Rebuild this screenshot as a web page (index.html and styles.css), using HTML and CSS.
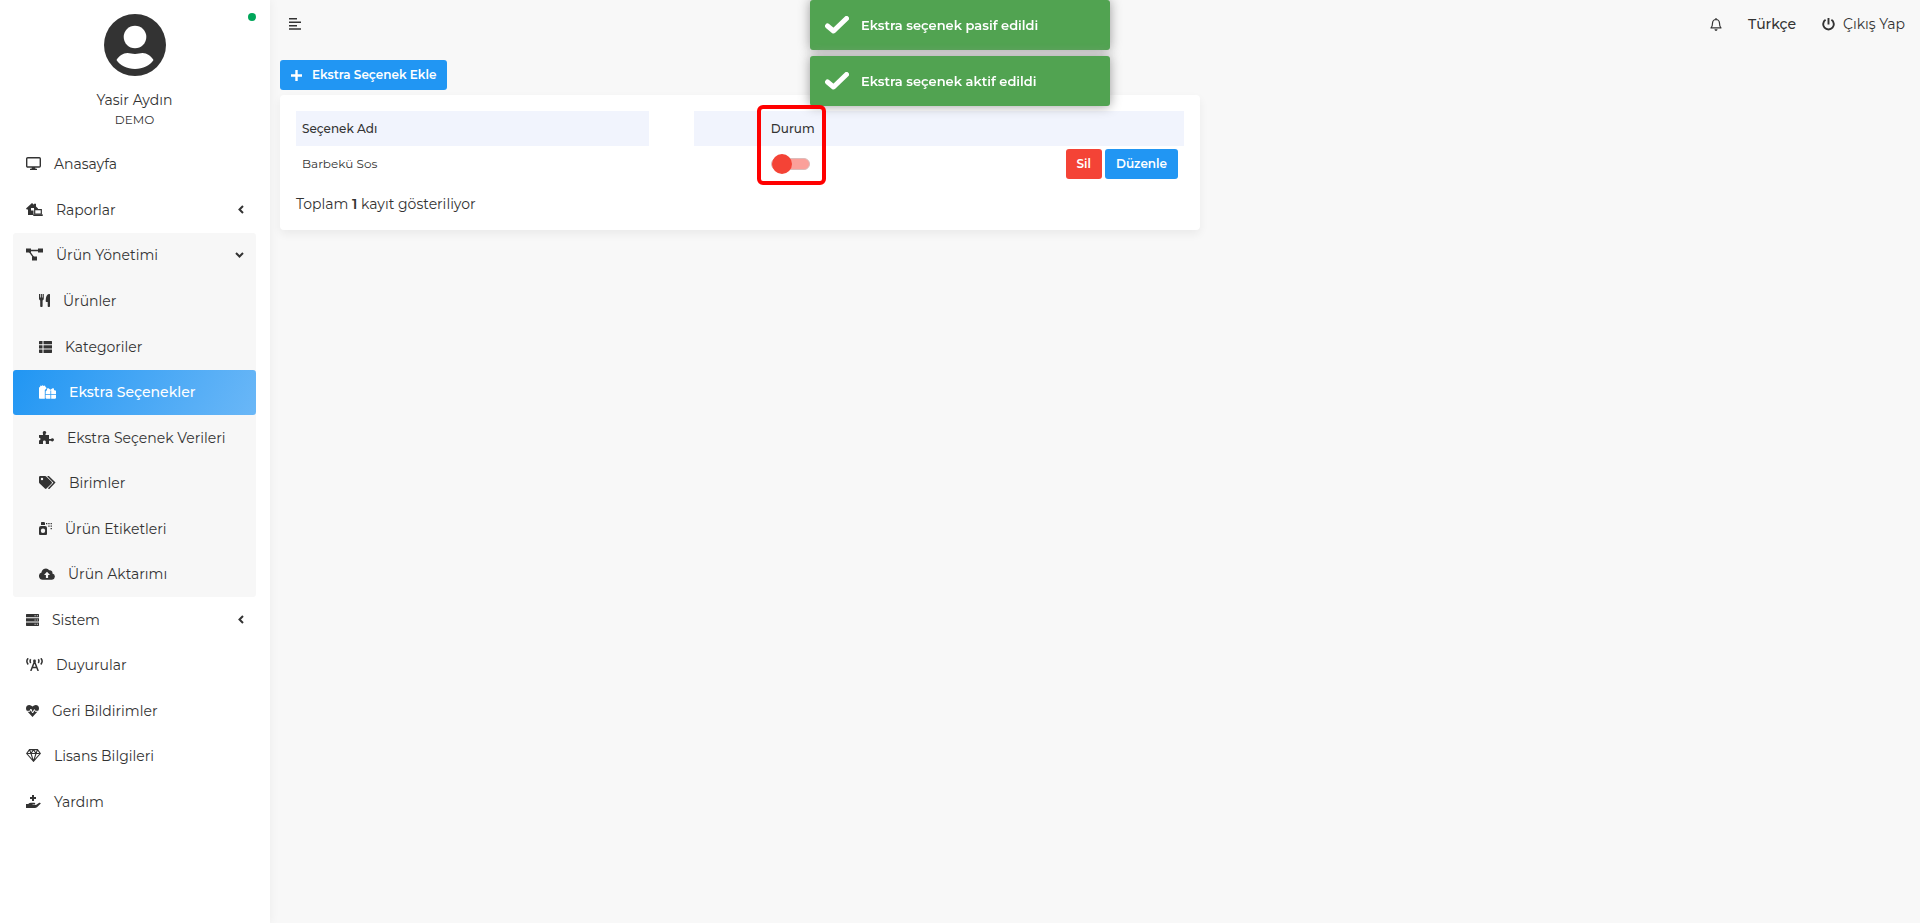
FILE: index.html
```html
<!DOCTYPE html>
<html lang="tr">
<head>
<meta charset="utf-8">
<meta name="viewport" content="width=device-width, initial-scale=1">
<title>Ekstra Seçenekler</title>
<link rel="stylesheet" href="styles.css">
</head>
<body>
<div class="layout">
  <aside class="sidebar">
    <span class="status-dot"></span>
    <div class="profile">
      <svg class="avatar" viewBox="0 0 62 62" aria-hidden="true"><circle cx="31" cy="31" r="31" fill="#333"/><circle cx="31" cy="23" r="11.3" fill="#fff"/><path d="M12.5 46C15 42 19 39 23.500 39C26 39 28 40 31 40S36 39 38.500 39C43 39 47 42 49.500 46C46 51.500 39 55 31 55S16 51.500 12.500 46Z" fill="#fff"/></svg>
      <div class="profile-name">Yasir Aydın</div>
      <div class="profile-role">DEMO</div>
    </div>
    <nav>
      <ul class="menu">
        <li><a class="link" href="#"><svg width="15" height="13" viewBox="0 0 15 13"><rect x=".7" y=".7" width="13.600" height="9.300" rx="1" fill="none" stroke="currentColor" stroke-width="1.400"/><path d="M6 10h3l.5 1.700h1.500V13H4v-1.300h1.500z"/></svg>Anasayfa</a></li>
        <li><a class="link" href="#"><svg width="17" height="13" viewBox="0 0 17 13"><path d="M0 5.500 6 0l2 1.800V.8h2v2.800L12 5.500v.4H8.500L7.500 7v5H2V6.500H.8z"/><path d="M5 5h3v2.500H5z" fill="#fff"/><path d="M8.700 6.700h6.600v4.500H8.700z" fill="#fff" stroke="currentColor" stroke-width="1.200"/><path d="M7 11.400h10v.5q0 1-1 1H8q-1 0-1-1z"/></svg>Raporlar<svg class="arrow" width="6" height="9" viewBox="0 0 6 9"><path d="M5 1 1.500 4.500 5 8" fill="none" stroke="currentColor" stroke-width="2"/></svg></a></li>
        <li class="group">
          <a class="link" href="#"><svg width="17" height="13" viewBox="0 0 17 13"><path d="M0 .5h5v4H0zM12 .5h5v4h-5zM6 8.500h5v4H6z"/><path d="M3 2.500h10M3 3l5 7" stroke="currentColor" stroke-width="1.300"/></svg>Ürün Yönetimi<svg class="arrow" width="9" height="6" viewBox="0 0 9 6"><path d="M1 1 4.500 4.500 8 1" fill="none" stroke="currentColor" stroke-width="2"/></svg></a>
          <ul class="submenu">
            <li><a class="link" href="#"><svg width="11" height="13" viewBox="0 0 11 13"><path d="M0 0h1.100v3.500h.7V0h1.100v3.500h.7V0h1.200v4.500q0 1.600-1.200 2.100V12.300q0 .7-.8.7H2q-.8 0-.8-.7V6.600Q0 6.100 0 4.500zM11 .5v11.800q0 .7-.8.7h-.7q-.8 0-.8-.7V8H7.500q-.8 0-.8-.8Q6.600 1 9.700 0 11-.2 11 .5"/></svg>Ürünler</a></li>
            <li><a class="link" href="#"><svg width="13" height="12" viewBox="0 0 13 12"><path d="M.5 0H3.500V3.300H0V.5zM4.500 0h8l.5.5v2.800H4.500zM0 4.300h3.500v3.300H0zM4.500 4.300H13v3.300H4.500zM0 8.600h3.500V12h-3L0 11.500zM4.500 8.600H13v2.900l-.5.500h-8z"/></svg>Kategoriler</a></li>
            <li><a class="link active" href="#"><svg width="17" height="14" viewBox="0 0 17 14"><path d="M0 3Q0 2 1 2L1.500.5 3 1l.7-1 .8 1L6 .5 6.500 2q1 .3 1 1.500L5.800 5v8.700H.8q-.8 0-.8-.8z"/><path d="M6.800 6 8 5.200 8 3.500l1.500-.2 2 1.500 2-1.500 1.500.2v1.700L16.200 5.200 17 6v3H12.200V5.500h-.8V9H6.600zM6.600 9.700h4.800v4H7.400l-.8-.8zM12.200 9.700H17v3.200l-.8.8h-4z"/></svg>Ekstra Seçenekler</a></li>
            <li><a class="link" href="#"><svg width="15" height="13" viewBox="0 0 15 13"><path d="M0 4h4V2.700Q3.600 2.200 3.800 1.200 4.200 0 5.500 0T7.200 1.200Q7.400 2.200 6.500 2.700V4H10v4h2q.5-1 1.500-.8Q15 7.500 15 8.800T13.500 10.500Q12.500 10.700 12 9.700h-2V13H6.800V10.500Q6.600 9.500 5.300 9.500T4 10.500V13H0V9.500Q1.500 9.200 1.500 8T0 6.800z"/></svg>Ekstra Seçenek Verileri</a></li>
            <li><a class="link" href="#"><svg width="17" height="13" viewBox="0 0 17 13"><path fill-rule="evenodd" d="M0 1.200Q0 0 1.200 0h5q.6 0 1 .4L12.600 5.800q.8.8 0 1.600L7.500 12.600q-.8.700-1.600 0L.4 7.200Q0 6.800 0 6.200zM3 1.800a1.200 1.200 0 1 0 0 2.400 1.200 1.200 0 0 0 0-2.400z"/><path d="M8.800 0 15.500 6.600 9.500 12.800" fill="none" stroke="currentColor" stroke-width="1.500"/></svg>Birimler</a></li>
            <li><a class="link" href="#"><svg width="13" height="13" viewBox="0 0 13 13"><path fill-rule="evenodd" d="M2 3V.7Q2 0 2.700 0h2Q6 0 6 1v2zM0 6q0-2 2-2h4q2 0 2 2v6q0 1-1 1H1q-1 0-1-1zM4 6.500a2.200 2.200 0 1 0 0 4.400 2.200 2.200 0 0 0 0-4.400z"/><path d="M7 1h1.300v1.300H7zM9.300 1h1.300v1.300H9.300zM11.600 1h1.300v1.300h-1.300zM9.300 3.500h1.300v1.300H9.300zM11.600 3.500h1.300v1.300h-1.300zM11.600 6h1.300v1.300h-1.300z"/></svg>Ürün Etiketleri</a></li>
            <li><a class="link" href="#"><svg width="16" height="12" viewBox="0 0 16 12"><path d="M3.800 11.700A3.700 3.700 0 0 1 2.500 4.500 4.300 4.300 0 0 1 10.300 2.300 2.600 2.600 0 0 1 13.400 5.400 3.200 3.200 0 0 1 13 11.700z"/><path d="M8 3.700 11 6.900H9.100v3H6.900v-3H5z" fill="#f7f7f7"/></svg>Ürün Aktarımı</a></li>
          </ul>
        </li>
        <li><a class="link" href="#"><svg width="13" height="12" viewBox="0 0 13 12"><path fill-rule="evenodd" d="M0 .5 .5 0h12l.5.500v2.800H0zM0 4.300h13v3.300H0zM0 8.600h13v2.900l-.5.500H.5l-.5-.5zM8.600 1.200v1h1v-1zM10.800 1.200v1h1v-1zM8.600 5.500v1h1v-1zM10.800 5.500v1h1v-1zM8.600 9.800v1h1v-1zM10.800 9.800v1h1v-1z"/></svg>Sistem<svg class="arrow" width="6" height="9" viewBox="0 0 6 9"><path d="M5 1 1.500 4.500 5 8" fill="none" stroke="currentColor" stroke-width="2"/></svg></a></li>
        <li><a class="link" href="#"><svg width="17" height="13" viewBox="0 0 17 13"><path d="M2.200.3Q-.5 3 2.200 6.500M14.800.3Q17.500 3 14.800 6.500M4.700 1.300Q3.500 3 4.700 5M12.300 1.300Q13.500 3 12.300 5M4.800 13 8.500 3.500 12.200 13M6 9.500h5" fill="none" stroke="currentColor" stroke-width="1.500"/><circle cx="8.500" cy="3" r="1.400"/></svg>Duyurular</a></li>
        <li><a class="link" href="#"><svg width="13" height="12" viewBox="0 0 13 12"><path d="M6.500 1.600Q8 0 9.700 0 13 .3 13 3.500q0 1.500-1.200 2.800L6.500 12 1.200 6.300Q0 5 0 3.500 0 .3 3.300 0 5 0 6.500 1.600"/><path d="M1 6.300H3.800L4.900 4l1.700 4L8.400 4.600l.8 1.700H12" fill="none" stroke="#fff" stroke-width="1"/></svg>Geri Bildirimler</a></li>
        <li><a class="link" href="#"><svg width="15" height="13" viewBox="0 0 15 13"><path d="M3.500.6h8L14.300 4.500 7.500 12.300.7 4.500zM.7 4.500h13.600M3.500.6 5 4.500 7.500 12.300 10 4.500 11.500.6M5 4.500 7.500.6 10 4.500" fill="none" stroke="currentColor" stroke-width="1.100"/></svg>Lisans Bilgileri</a></li>
        <li><a class="link" href="#"><svg width="15" height="13" viewBox="0 0 15 13"><path d="M6 0h2v2h2v2H8v2H6V4H4V2h2zM0 9h2.200Q3.500 7.800 5 7.800H8.500Q9.500 8 9.200 9.500H6.500v.6H10L13.200 7.800Q14.500 7.500 14.800 8.500L11 12.200Q10 13 9 13H0z"/></svg>Yardım</a></li>
      </ul>
    </nav>
  </aside>

  <div class="page">
    <header class="topbar">
      <button class="icon-button" type="button" aria-label="Menü"><svg width="12" height="12" viewBox="0 0 12 12"><path d="M0 .8h8M0 4.300h12M0 7.700h8M0 11h12" stroke="currentColor" stroke-width="1.600"/></svg></button>
      <div class="topbar-right">
        <button class="icon-button" type="button" aria-label="Bildirimler"><svg width="12" height="13" viewBox="0 0 12 13"><path d="M6 0v1.400M1 9.900Q2.500 8.500 2.500 5.200 2.700 1.600 6 1.500q3.300.100 3.500 3.700 0 3.300 1.500 4.700z" fill="none" stroke="currentColor" stroke-width="1.200" stroke-linejoin="round"/><path d="M4.400 11.200h3.200Q7.300 13 6 13T4.400 11.200"/></svg></button>
        <a class="language" href="#">Türkçe</a>
        <a class="logout" href="#"><svg width="13" height="13" viewBox="0 0 13 13"><path d="M3.600 1.800a5.300 5.300 0 1 0 5.800 0M6.500 0v6.500" fill="none" stroke="currentColor" stroke-width="1.900"/></svg>Çıkış Yap</a>
      </div>
    </header>

    <main class="content">
      <section>
        <button class="btn btn-blue btn-add" type="button"><svg width="11" height="11" viewBox="0 0 11 11"><path d="M5.500 0v11M0 5.500h11" stroke="currentColor" stroke-width="2.400"/></svg>Ekstra Seçenek Ekle</button>
        <div class="card">
          <table class="table">
            <colgroup><col class="col-name"><col class="col-gap"><col class="col-lead"><col><col></colgroup>
            <thead>
              <tr><th>Seçenek Adı</th><td></td><th></th><th class="status-head" id="durum">Durum<span class="highlight"></span></th><th></th></tr>
            </thead>
            <tbody>
              <tr><td>Barbekü Sos</td><td></td><td></td><td><input class="switch" type="checkbox" aria-labelledby="durum"></td><td><div class="actions"><button class="btn btn-red" type="button">Sil</button><button class="btn btn-blue" type="button">Düzenle</button></div></td></tr>
            </tbody>
          </table>
          <p class="summary">Toplam <b>1</b> kayıt gösteriliyor</p>
        </div>
      </section>
    </main>
  </div>
</div>

<div class="toasts" role="status">
  <div class="toast"><svg width="24" height="18" viewBox="0 0 24 18"><path d="M2.500 10 8.500 15 21.500 2.500" fill="none" stroke="currentColor" stroke-width="5" stroke-linecap="round" stroke-linejoin="round"/></svg>Ekstra seçenek pasif edildi</div>
  <div class="toast"><svg width="24" height="18" viewBox="0 0 24 18"><path d="M2.500 10 8.500 15 21.500 2.500" fill="none" stroke="currentColor" stroke-width="5" stroke-linecap="round" stroke-linejoin="round"/></svg>Ekstra seçenek aktif edildi</div>
</div>
</body>
</html>
```

FILE: styles.css
```css
* { box-sizing: border-box; }

body {
  margin: 0;
  background: #f8f8f8;
  color: #333;
  font: 14px/20px Montserrat, Inter, "Open Sans", sans-serif;
}

a { color: inherit; text-decoration: none; }
ul { list-style: none; margin: 0; padding: 0; }
svg { fill: currentColor; flex: none; }
button { font: inherit; color: inherit; cursor: pointer; }

.layout { display: flex; min-height: 100vh; }

/* Sidebar */
.sidebar {
  position: relative;
  flex: none;
  width: 270px;
  padding: 14px 14px 0 13px;
  background: #fff;
  box-shadow: 0 0 10px rgba(0, 0, 0, .06);
}
.status-dot {
  position: absolute;
  top: 13px;
  right: 14px;
  width: 8px;
  height: 8px;
  border-radius: 50%;
  background: #00a65a;
}
.profile { text-align: center; margin-bottom: 12px; }
.avatar { display: block; width: 62px; height: 62px; margin: 0 auto 14px; }
.profile-role { font-size: 12px; }

.menu > li:nth-child(odd),
.submenu > li:nth-child(odd):not(:last-child) { margin-bottom: 1px; }
.menu > li:last-child { margin-bottom: 0; }
.link {
  display: flex;
  align-items: center;
  gap: 13px;
  height: 45px;
  padding: 0 12px 2px 13px;
  border-radius: 3px;
}
.arrow { margin-left: auto; }
.group { background: #f7f7f7; border-radius: 3px; }
.submenu { padding-top: 1px; }
.submenu .link { padding-left: 26px; }
.link.active {
  background: linear-gradient(118deg, #2196f3, #6ab7f7);
  color: #fff;
  font-weight: 500;
}

/* Top bar */
.page { flex: 1; min-width: 0; }
.topbar {
  display: flex;
  justify-content: space-between;
  align-items: center;
  height: 50px;
  padding: 0 15px 2px 19px;
}
.icon-button { display: flex; padding: 0; border: 0; background: none; }
.topbar-right { display: flex; align-items: center; gap: 26px; }
.language { font-weight: 500; }
.logout { display: flex; align-items: center; gap: 8px; }

/* Content */
.content {
  display: grid;
  grid-template-columns: 23fr 17fr;
  gap: 30px;
  padding: 10px;
}
.btn {
  display: inline-flex;
  align-items: center;
  height: 30px;
  padding: 0 11px;
  border: 0;
  border-radius: 3px;
  color: #fff;
  font-size: 12px;
  font-weight: 600;
}
.btn-blue { background: #2196f3; }
.btn-red { background: #f44336; }
.btn-add { display: flex; gap: 10px; margin-bottom: 5px; }
.card {
  padding: 16px;
  border-radius: 4px;
  background: #fff;
  box-shadow: 0 4px 10px rgba(0, 0, 0, .06);
}
.table {
  width: 100%;
  table-layout: fixed;
  border-collapse: collapse;
  font-size: 12px;
}
.col-name { width: 39.8%; }
.col-gap { width: 5%; }
.col-lead { width: 8%; }
.table th {
  height: 35px;
  padding: 0 6px;
  background: #f1f4fd;
  font-weight: 500;
  text-align: left;
}
.table td { padding: 3px 6px; }
.status-head { position: relative; }
.highlight {
  position: absolute;
  top: -6px;
  left: -8px;
  z-index: 30;
  width: 69px;
  height: 80px;
  border: 4px solid #f00;
  border-radius: 6px;
}
.actions { display: flex; justify-content: flex-end; gap: 3px; }
.switch {
  appearance: none;
  display: flex;
  align-items: center;
  width: 39px;
  height: 12px;
  margin: 0;
  border: 1px solid #dcbcba;
  border-radius: 6px;
  background: #fba09a;
}
.switch::before {
  content: "";
  flex: none;
  width: 20px;
  height: 20px;
  border-radius: 50%;
  background: #f44336;
}
.switch:checked::before { margin-left: auto; }
.summary { margin: 12px 0 0; }
.summary b { font-weight: 600; }

/* Notifications */
.toasts {
  position: fixed;
  top: 0;
  left: 50%;
  z-index: 20;
  display: grid;
  gap: 6px;
  width: 300px;
  margin-left: -150px;
}
.toast {
  display: flex;
  align-items: center;
  gap: 12px;
  padding: 15px;
  border-radius: 3px;
  background: #51a351;
  box-shadow: 0 0 12px #999;
  color: #fff;
  font-size: 13px;
  font-weight: 600;
}
```
